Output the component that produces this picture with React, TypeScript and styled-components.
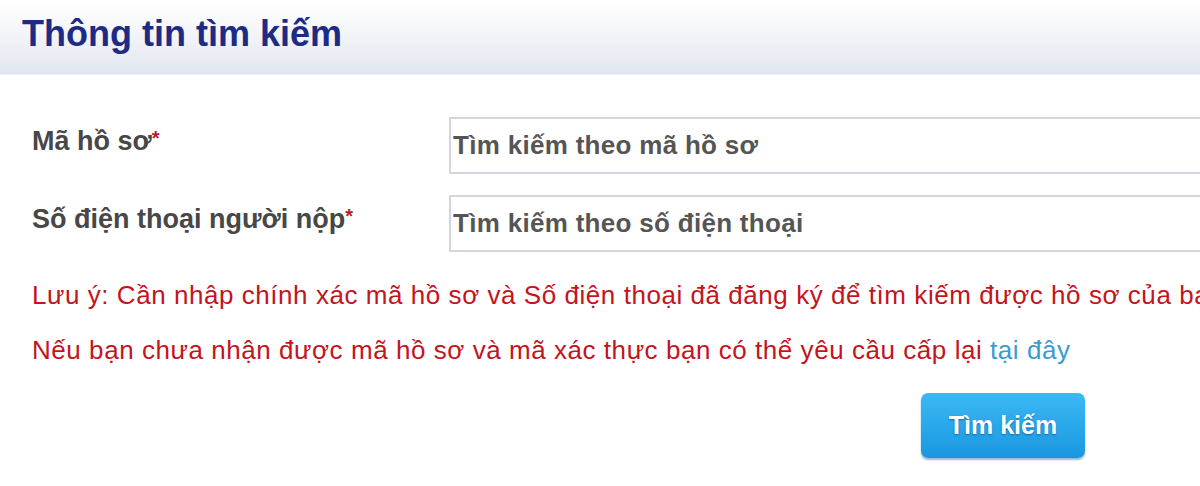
import styled, { createGlobalStyle } from "styled-components";

const GlobalStyles = createGlobalStyle`
  html, body {
    margin: 0;
    padding: 0;
    background: #ffffff;
    overflow: hidden;
    font-family: "Liberation Sans", Arial, sans-serif;
  }
`;

const Page = styled.div`
  width: 1200px;
  height: 486px;
  overflow: hidden;
  display: flex;
  flex-direction: column;
`;

const Header = styled.div`
  height: 75px;
  box-sizing: border-box;
  padding: 0 0 7px 22px;
  display: flex;
  align-items: center;
  background: linear-gradient(to bottom, #ffffff 0%, #f4f5f9 45%, #e1e5ee 100%);
  border-bottom: 1px solid #edf0f5;
`;

const Title = styled.h1`
  margin: 0;
  font-size: 36px;
  font-weight: 700;
  color: #1c2b85;
`;

const Form = styled.div`
  padding: 42px 0 0 32px;
  display: flex;
  flex-direction: column;
`;

const FieldRow = styled.div`
  display: flex;
  align-items: center;
  height: 57px;
  margin-bottom: 21px;
`;

const Label = styled.label`
  width: 417px;
  flex-shrink: 0;
  font-size: 27px;
  font-weight: 700;
  color: #474747;
  margin-top: -8px;
`;

const Star = styled.span`
  color: #b3202a;
  font-size: 20px;
  vertical-align: 5px;
`;

const Input = styled.input`
  flex: 1;
  min-width: 800px;
  height: 57px;
  box-sizing: border-box;
  border: 2px solid #d3d6de;
  border-right: none;
  background: #ffffff;
  padding: 0 0 0 2px;
  font-family: "Liberation Sans", Arial, sans-serif;
  font-size: 26px;
  letter-spacing: 0.3px;
  outline: none;

  &::placeholder {
    color: #555555;
    font-weight: 700;
    opacity: 1;
  }
`;

// the first note runs past the right edge, as in the original page
const Notes = styled.div`
  margin-top: 7px;
  display: flex;
  flex-direction: column;
  gap: 25px;
`;

const Note = styled.p`
  margin: 0;
  white-space: nowrap;
  font-size: 26px;
  line-height: 30px;
  letter-spacing: 0.55px;
  color: #c4141c;
`;

const HereLink = styled.a`
  color: #3a9cd1;
  text-decoration: none;
`;

const Actions = styled.div`
  display: flex;
  justify-content: flex-start;
  padding-left: 889px;
  margin-top: 28px;
`;

const SearchButton = styled.button`
  width: 164px;
  height: 65px;
  border: none;
  border-radius: 7px;
  background: linear-gradient(to bottom, #3cb9f3 0%, #27a6ea 55%, #1b97df 100%);
  box-shadow: 0 2px 2px rgba(20, 100, 160, 0.45);
  color: #ffffff;
  font-family: "Liberation Sans", Arial, sans-serif;
  font-size: 25px;
  font-weight: 700;
  text-shadow: 0 1px 2px rgba(0, 60, 110, 0.55);
  cursor: pointer;
`;

const App = () => {
  return (
    <Page>
      <GlobalStyles />
      <Header>
        <Title>Thông tin tìm kiếm</Title>
      </Header>
      <Form>
        <FieldRow>
          <Label>
            Mã hồ sơ<Star>*</Star>
          </Label>
          <Input placeholder="Tìm kiếm theo mã hồ sơ" />
        </FieldRow>
        <FieldRow>
          <Label>
            Số điện thoại người nộp<Star>*</Star>
          </Label>
          <Input placeholder="Tìm kiếm theo số điện thoại" />
        </FieldRow>
        <Notes>
          <Note>
            Lưu ý: Cần nhập chính xác mã hồ sơ và Số điện thoại đã đăng ký để
            tìm kiếm được hồ sơ của bạn
          </Note>
          <Note>
            Nếu bạn chưa nhận được mã hồ sơ và mã xác thực bạn có thể yêu cầu
            cấp lại <HereLink href="#">tại đây</HereLink>
          </Note>
        </Notes>
        <Actions>
          <SearchButton>Tìm kiếm</SearchButton>
        </Actions>
      </Form>
    </Page>
  );
};

export default App;
